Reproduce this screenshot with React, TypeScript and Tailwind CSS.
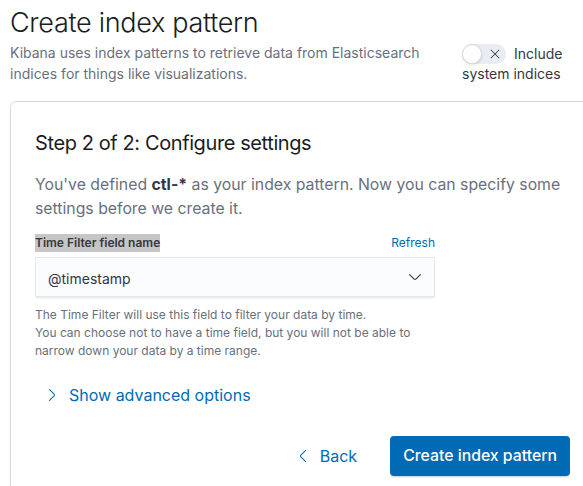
import React from "react";

const ArrowRight = ({ className }: { className?: string }) => (
  <svg viewBox="0 0 16 16" className={className} fill="currentColor">
    <path d="M5.157 13.069l4.611-4.685a.546.546 0 000-.768L5.158 2.93a.552.552 0 010-.771.53.53 0 01.759 0l4.61 4.684c.631.641.63 1.672 0 2.312l-4.61 4.684a.53.53 0 01-.76 0 .552.552 0 010-.771z" />
  </svg>
);

const ArrowLeft = ({ className }: { className?: string }) => (
  <svg viewBox="0 0 16 16" className={className} fill="currentColor">
    <path d="M10.843 13.069L6.232 8.384a.546.546 0 010-.768l4.61-4.685a.552.552 0 000-.771.53.53 0 00-.759 0l-4.61 4.684a1.650 1.650 0 000 2.312l4.61 4.684a.53.53 0 00.76 0 .552.552 0 000-.771z" />
  </svg>
);

const ArrowDown = ({ className }: { className?: string }) => (
  <svg viewBox="0 0 16 16" className={className} fill="currentColor">
    <path d="M13.069 5.157L8.384 9.768a.546.546 0 01-.768 0L2.930 5.158a.552.552 0 00-.771 0 .53.53 0 000 .759l4.684 4.61c.641.631 1.672.63 2.312 0l4.684-4.61a.53.53 0 000-.76.552.552 0 00-.771 0z" />
  </svg>
);

const Cross = ({ className }: { className?: string }) => (
  <svg viewBox="0 0 16 16" className={className} fill="currentColor">
    <path d="M7.293 8L3.146 3.854a.5.5 0 11.708-.708L8 7.293l4.146-4.147a.5.5 0 01.708.708L8.707 8l4.147 4.146a.5.5 0 01-.708.708L8 8.707l-4.146 4.147a.5.5 0 01-.708-.708L7.293 8z" />
  </svg>
);

export default function App() {
  return (
    <div
      className="w-[583px] h-[486px] overflow-hidden bg-white"
      style={{ fontFamily: "Inter, 'Noto Sans', sans-serif" }}
    >
      <div className="flex items-end justify-between pl-[10px] pr-[10px]">
        <div className="w-[420px]">
          <h1 className="pt-[7px] text-[27px] leading-[32px] font-light tracking-[-0.011em] text-[#1a1c21]">
            Create index pattern
          </h1>
          <p className="mt-[3px] text-[14px] leading-[21px] text-[#69707d]">
            Kibana uses index patterns to retrieve data from Elasticsearch indices for things like visualizations.
          </p>
        </div>
        <div className="w-[111px] text-[14px] leading-[20px] text-[#343741]">
          <span className="inline-flex align-top items-center w-[44px] h-[20px] rounded-full bg-[#e9edf3] mr-[8px] relative">
            <span className="w-[20px] h-[20px] rounded-full bg-white border border-[#d3dae6] shadow-sm" />
            <Cross className="w-[14px] h-[14px] ml-[6px] text-[#343741]" />
          </span>
          Include system indices
        </div>
      </div>

      <div className="mt-[17px] ml-[10px] w-[585px] border border-[#d3dae6] rounded-[6px] px-[24px] pt-[25px] pb-[24px] shadow-[0_1px_2px_rgba(0,0,0,0.04)]">
        <h2 className="text-[20px] leading-[32px] tracking-[-0.02em] text-[#1a1c21]">
          Step 2 of 2: Configure settings
        </h2>
        <p className="mt-[14px] text-[15.8px] leading-[24px] text-[#69707d]">
          You've defined <strong className="font-bold text-[#343741]">ctl-*</strong> as your index pattern. Now you can specify some settings before we create it.
        </p>

        <div className="mt-[13px] w-[400px]">
          <div className="flex justify-between items-center h-[18px] text-[12px] leading-[18px]">
            <span className="font-semibold text-[#343741] bg-[#c6c6c6]">Time Filter field name</span>
            <span className="text-[#006bb4]">Refresh</span>
          </div>
          <div className="mt-[5px] h-[40px] flex items-center justify-between pl-[12px] pr-[11px] bg-[#fbfcfd] border border-[#e3e7ed] shadow-[0_2px_2px_-1px_rgba(152,162,179,0.3)] text-[14px] text-[#343741]">
            <span className="pt-[2px]">@timestamp</span>
            <ArrowDown className="w-[16px] h-[16px] text-[#343741]" />
          </div>
          <p className="mt-[9px] text-[12px] leading-[18px] text-[#69707d]">
            The Time Filter will use this field to filter your data by time.
            <br />
            You can choose not to have a time field, but you will not be able to narrow down your data by a time range.
          </p>
        </div>

        <div className="mt-[23px] flex items-center h-[24px] text-[16px] text-[#006bb4]">
          <ArrowRight className="w-[16px] h-[16px] ml-[9px] mr-[9px]" />
          <span>Show advanced options</span>
        </div>

        <div className="mt-[29px] flex justify-end items-center gap-[33px]">
          <div className="flex items-center text-[16px] text-[#006bb4]">
            <ArrowLeft className="w-[16px] h-[16px] mr-[9px]" />
            <span>Back</span>
          </div>
          <button className="h-[40px] px-[13px] rounded-[4px] bg-[#006bb4] text-white text-[15.8px] font-medium shadow-[0_2px_2px_-1px_rgba(54,97,126,0.3)]">
            Create index pattern
          </button>
        </div>
      </div>
    </div>
  );
}
